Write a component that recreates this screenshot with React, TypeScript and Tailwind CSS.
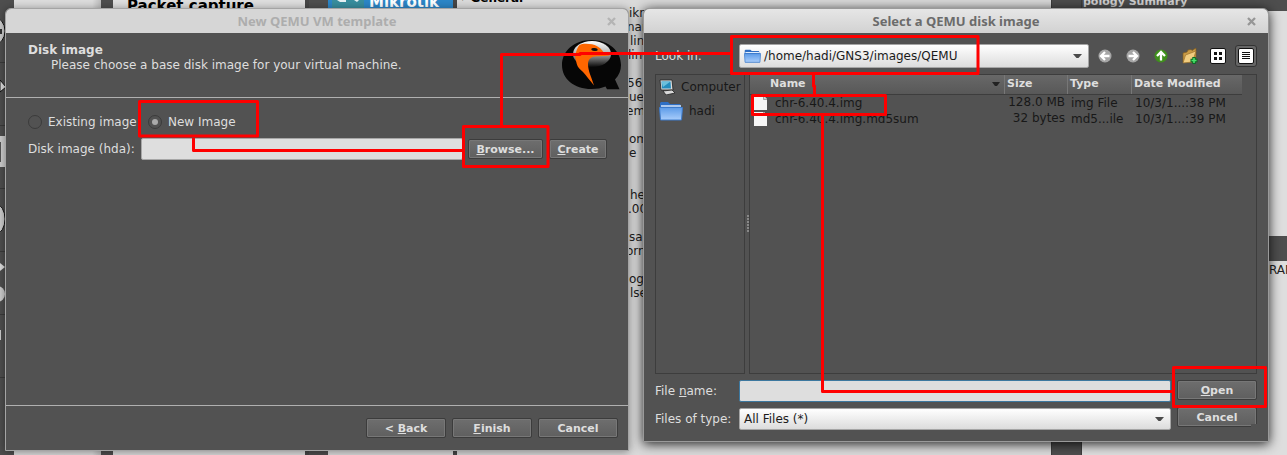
import React from "react";

const snippets: { y: number; dx: number; t: string }[] = [
  { y: 6, dx: 0, t: "ikro" },
  { y: 20, dx: -2, t: "nan" },
  { y: 34, dx: 1, t: "line" },
  { y: 48, dx: -1, t: "line" },
  { y: 76, dx: -2, t: "56" },
  { y: 90, dx: 0, t: "ue" },
  { y: 104, dx: -3, t: "em" },
  { y: 132, dx: 0, t: "om" },
  { y: 146, dx: 0, t: "e" },
  { y: 188, dx: 1, t: "he" },
  { y: 202, dx: -1, t: ".00" },
  { y: 230, dx: 0, t: "sal" },
  { y: 244, dx: -3, t: "orn" },
  { y: 272, dx: 0, t: "og" },
  { y: 286, dx: 1, t: "lse" },
];

function Btn({ children, className = "" }: { children: React.ReactNode; className?: string }) {
  return (
    <button
      className={`flex h-[20px] shrink-0 items-center justify-center rounded-[2px] border border-[#3c3c3c] bg-linear-to-b from-[#6e6e6e] to-[#5f5f5f] font-bold text-[11px] leading-none text-[#dedede] shadow-[inset_0_0_0_1px_#777] ${className}`}
    >
      <span>{children}</span>
    </button>
  );
}

function TitleBar({ title, active = false }: { title: string; active?: boolean }) {
  return (
    <div
      className={`relative flex h-[24px] shrink-0 items-center justify-center rounded-t-[5px] font-['Noto_Sans'] text-[13px] font-bold ${
        active ? "bg-linear-to-b from-[#e6e6e6] to-[#d2d2d2] text-[#6b6b6b]" : "bg-[#d6d6d6] text-[#adadad]"
      }`}
    >
      <span className="relative top-px">{title}</span>
      <svg className={`absolute right-[12px] top-[8px] ${active ? "text-[#969696]" : "text-[#b4b4b4]"}`} width="9" height="9" viewBox="0 0 9 9">
        <path d="M1 1l7 7M8 1l-7 7" stroke="currentColor" strokeWidth="2.3" />
      </svg>
    </div>
  );
}

function Folder({ w, h }: { w: number; h: number }) {
  return (
    <svg width={w} height={h} viewBox="0 0 24 20" preserveAspectRatio="none" className="shrink-0">
      <path d="M1 5V2l1-1h7l2 2h10l1 2v14H2z" fill="#2f6fc4" />
      <path d="M2 5h20" stroke="#e3efff" strokeWidth="1.4" />
      <path d="M.5 6.500h23L22.500 19h-21z" fill="url(#folderBlue)" stroke="#3c7acb" />
    </svg>
  );
}

function FileIcon() {
  return (
    <svg width="13" height="14" viewBox="0 0 13 14" className="shrink-0">
      <path d="M0 0h10l3 3V14H0z" fill="#f6f6f6" />
      <path d="M9.500 0v3.500H13" fill="#ccc" stroke="#777" strokeWidth=".6" />
    </svg>
  );
}

function QemuLogo() {
  return (
    <svg width="60" height="51" viewBox="0 0 60 51" className="shrink-0">
      <defs>
        <linearGradient id="gloss" x1="0" y1="0" x2="0" y2="1">
          <stop offset="0" stopColor="#fff" />
          <stop offset=".45" stopColor="#b5b5b5" />
          <stop offset="1" stopColor="#0a0a0a" />
        </linearGradient>
      </defs>
      <path d="M29.500 0C12 0 0 11 0 25s12 24 29.500 24c5.500 0 10-.8 14-2.500l1.500 2.700h12.500L53 39.500c4-4 6-9 6-14.500C59 11 47 0 29.500 0z" fill="#060606" />
      <ellipse cx="30" cy="14" rx="19" ry="13" fill="url(#gloss)" />
      <path d="M17 5.500C21 3 26 4 30 4.200c4 .8 6 2.500 8.500 4.300 1.500 1.500 2.500 3 3.500 4.500l6 2.500c-4 .5-7 .5-10 .8-4 .2-6 0-8.500 1.200-2.500 1.500-3.500 3.500-3.500 6.500 0 7 3.500 13 6 21.500-4-5-7.500-9.500-11-13.500-3-3-5.500-4.500-6.200-8C14 20 13 18.500 13 15.500c1-3.500 2-7 4-10z" fill="#ff6600" />
      <ellipse cx="32.500" cy="9.500" rx="3.200" ry="1.500" fill="#111" transform="rotate(8 32.500 9.500)" />
    </svg>
  );
}

function Backdrop() {
  return (
    <div className="absolute inset-0 flex overflow-hidden bg-[#4e4e4e] text-[12px]">
      <svg width="14" height="455" className="shrink-0">
        <g stroke="#3a3a3a">
          <path d="M0 62.500h14M0 125.500h14M0 188.500h14M0 251.500h14M0 314.500h14M0 377.500h14" />
        </g>
        <rect y="136" width="6" height="31" fill="#cfcfcf" />
        <rect y="142" width="1" height="20" fill="#555" />
        <ellipse cx="-6" cy="31" rx="11" ry="14" fill="#ccc" stroke="#111" />
        <rect y="29" width="2" height="5" fill="#333" />
        <path d="M0 80l6 7-6 5z" fill="#ddd" stroke="#111" />
        <ellipse cx="-4" cy="219" rx="9" ry="15" fill="#ccc" stroke="#111" />
        <path d="M0 263l5 4-5 4z" fill="#ddd" />
        <circle cx="-3" cy="294" r="8" fill="#ccc" />
        <rect y="330" width="1" height="10" fill="#ccc" />
      </svg>
      <div className="w-[87px] shrink-0 bg-linear-to-r from-[#dcdcdc] from-90% to-[#bcbcbc]" />
      <div className="w-[12px] shrink-0" />
      <div className="w-[192px] shrink-0 bg-[#dedede] pl-[14px] text-[15px] font-bold leading-[18px] text-black">
        <div className="-mt-[3px] whitespace-nowrap">Packet capture</div>
      </div>
      <div className="w-[23px] shrink-0 border-l-4 border-[#464646]" />
      <div className="w-[125px] shrink-0 bg-[#dedede]">
        <div className="flex h-[8px] bg-[#2c86c7] pl-[4px]">
          <div className="mr-[5px] h-[8px] w-[32px] shrink-0 bg-[#388e9e]">
            <svg width="32" height="8">
              <path d="M5 0h9v2H8zM22 0h5l-2 2z" fill="#e6f2f4" />
            </svg>
          </div>
          <span className="-mt-[6px] text-[15px] font-bold leading-[16px] text-white">Mikrotik</span>
        </div>
      </div>
      <div className="w-[4px] shrink-0 bg-[#464646]" />
      <div className="relative w-[594px] shrink-0 bg-[#dadada] text-[#202020]">
        <div className="-mt-[9px] flex items-center gap-[5px] pl-[3px] text-[12px] font-bold leading-[14px] text-black">
          <span className="text-[7px]">▼</span>General
        </div>
        {snippets.map(({ y, dx, t }) => (
          <div key={y} className="absolute left-[172px] whitespace-nowrap leading-[14px]" style={{ top: y, marginLeft: dx }}>
            {t}
          </div>
        ))}
      </div>
      <div className="w-[31px] shrink-0 border-x border-[#3d3d3d]" />
      <div className="flex flex-1 flex-col">
        <div className="h-[11px] shrink-0 text-[11px] font-bold leading-[12px] text-[#d5d5d5]">
          <div className="-mt-[4px] pl-px">pology Summary</div>
        </div>
        <div className="h-[225px] shrink-0 bg-[#dedede]" />
        <div className="h-[25px] shrink-0" />
        <div className="flex-1 bg-[#dedede] pl-[187px] pt-[2px] text-[12px] leading-[14px] text-[#222]">RAM</div>
      </div>
    </div>
  );
}

function WizardWindow() {
  return (
    <div className="absolute left-[5px] top-[8px] flex h-[443px] w-[624px] flex-col rounded-t-[6px] border border-[#a4a4a4] bg-[#525252] text-[12px] text-[#dedede] shadow-[0_1px_8px_rgba(0,0,0,0.4)]">
      <TitleBar title="New QEMU VM template" />
      <div className="flex h-[65px] shrink-0 justify-between border-b border-[#b0b0b0] pl-[22px] pr-[6px]">
        <div className="pt-[10px] leading-[15px]">
          <div className="font-bold">Disk image</div>
          <div className="pl-[23px]">Please choose a base disk image for your virtual machine.</div>
        </div>
        <div className="pt-[7px]"><QemuLogo /></div>
      </div>
      <div className="flex flex-1 flex-col pl-[22px] pt-[16px]">
        <div className="flex h-[16px] items-center">
          <span className="size-[14px] rounded-full border border-[#3b3b3b]" />
          <span className="ml-[6px] w-[100px]">Existing image</span>
          <span className="flex size-[14px] items-center justify-center rounded-full border border-[#3b3b3b]">
            <span className="size-[6px] rounded-full bg-[#aaa]" />
          </span>
          <span className="ml-[6px]">New Image</span>
        </div>
        <div className="mt-[8px] flex h-[22px] items-center">
          <span className="w-[113px]">Disk image (hda):</span>
          <span className="h-[22px] w-[322px] rounded-[2px] border border-[#a7a7a7] bg-[#dedede]" />
          <Btn className="ml-[5px] w-[75px]"><u>B</u>rowse...</Btn>
          <Btn className="ml-[6px] w-[58px]"><u>C</u>reate</Btn>
        </div>
      </div>
      <div className="flex h-[45px] shrink-0 justify-end gap-[6px] border-t border-[#b0b0b0] pr-[10px] pt-[12px]">
        <Btn className="w-[80px]">&lt; <u>B</u>ack</Btn>
        <Btn className="w-[80px]"><u>F</u>inish</Btn>
        <Btn className="w-[80px]">Cancel</Btn>
      </div>
    </div>
  );
}

function NavArrow({ turn, green = false }: { turn: number; green?: boolean }) {
  return (
    <svg width="14" height="14" viewBox="0 0 14 14" className="shrink-0">
      <circle cx="7" cy="7" r="6.500" fill={green ? "#3f8f1c" : "#a6a6a6"} />
      <g transform={`rotate(${turn} 7 7)`}>
        <path d="M11.500 7H4M7 3L3 7l4 4" fill="none" stroke="#fff" strokeWidth="2.300" />
      </g>
    </svg>
  );
}

function Caret() {
  return (
    <svg width="9" height="5" viewBox="0 0 9 5" className="shrink-0">
      <path d="M0 0h9L5.500 4h-2z" fill="#4a4a4a" />
    </svg>
  );
}

function FileDialog() {
  return (
    <div className="absolute left-[643px] top-[8px] flex h-[434px] w-[626px] flex-col rounded-t-[6px] border border-[#9a9a9a] bg-[#525252] text-[12px] text-[#dedede] shadow-[0_2px_12px_rgba(0,0,0,0.85)]">
      <TitleBar title="Select a QEMU disk image" active />
      <div className="flex h-[41px] shrink-0 items-center pl-[11px] pt-[5px]">
        <span className="w-[84px]">Look in:</span>
        <div className="flex h-[24px] w-[350px] items-center rounded-[2px] border border-[#a5a5a5] bg-linear-to-b from-white to-[#dcdcdc] pl-[4px] pr-[6px] text-[#1b1b1b]">
          <Folder w={17} h={14} />
          <span className="ml-[3px] flex-1">/home/hadi/GNS3/images/QEMU</span>
          <Caret />
        </div>
        <div className="ml-[9px] flex items-center gap-[14px]">
          <NavArrow turn={0} />
          <NavArrow turn={180} />
          <NavArrow turn={90} green />
        </div>
        <svg width="16" height="16" viewBox="0 0 16 16" className="ml-[14px] shrink-0">
          <path d="M1 14V5l4-1 1-2 3-.500 1 1L14 0v9l-3 5z" fill="#c99a45" stroke="#805b20" strokeWidth=".7" />
          <path d="M1 15L3.500 7 14 3l-3.500 11z" fill="#f1cd80" stroke="#9b712b" strokeWidth=".7" />
          <path d="M12 9v7M8.500 12.500h7" stroke="#0a6b23" strokeWidth="3.400" />
          <path d="M12 10v5M9.500 12.500h5" stroke="#4be36c" strokeWidth="1.600" />
        </svg>
        <svg width="16" height="16" viewBox="0 0 16 16" className="ml-[12px] shrink-0">
          <rect x=".5" y=".5" width="15" height="15" rx="1.500" fill="#fff" stroke="#111" />
          <path d="M4 4h3v3H4zM9 4h3v3H9zM4 9h3v3H4zM9 9h3v3H9z" fill="#111" />
        </svg>
        <div className="ml-[9px] flex size-[22px] items-center justify-center rounded-[3px] border border-[#333] bg-[#666]">
          <svg width="16" height="16" viewBox="0 0 16 16">
            <rect x=".5" y=".5" width="15" height="15" rx="1.500" fill="#fff" stroke="#111" />
            <path d="M4 4.500h8M4 6.500h8M4 8.500h8M4 10.500h8" stroke="#111" />
          </svg>
        </div>
      </div>
      <div className="flex h-[300px] shrink-0 pl-[11px] text-[#181818]">
        <div className="w-[90px] border border-[#3d3d3d]">
          <div className="flex h-[24px] items-center pl-[3px]">
            <svg width="16" height="16" viewBox="0 0 16 16" className="shrink-0">
              <path d="M1 1h12l1 10H2z" fill="#ddd" stroke="#222" strokeWidth=".8" />
              <path d="M2.500 2.500h9l.5 7h-9z" fill="#258dbe" />
              <path d="M2.500 2.500h9L4 8z" fill="#6bc0dd" />
              <path d="M4 12l9-1 3 3-9 2z" fill="#d8d8d8" stroke="#222" strokeWidth=".8" />
            </svg>
            <span className="ml-[6px]">Computer</span>
          </div>
          <div className="flex h-[24px] items-center pl-[3px]">
            <Folder w={24} h={20} />
            <span className="ml-[6px]">hadi</span>
          </div>
        </div>
        <div className="flex w-[4px] items-center justify-end">
          <svg width="2" height="20"><path d="M1 1v18" stroke="#888" strokeWidth="2" strokeDasharray="2 1" /></svg>
        </div>
        <div className="w-[508px] border border-[#3d3d3d]">
          <div className="flex h-[20px] w-[492px] border-b border-[#3d3d3d] bg-linear-to-b from-[#686868] to-[#585858] text-[11px] font-bold leading-[17px] text-[#dedede]">
            <div className="flex w-[255px] items-center justify-between border-r border-[#777] pl-[20px] pr-[4px]">
              <span className="-mt-[2px]">Name</span>
              <svg width="8" height="5"><path d="M0 0h8L5 4H3z" fill="#222" /></svg>
            </div>
            <div className="w-[63px] border-r border-[#777] pl-[2px]">Size</div>
            <div className="w-[64px] border-r border-[#777] pl-[2px]">Type</div>
            <div className="flex-1 pl-[2px]">Date Modified</div>
          </div>
          {[
            ["chr-6.40.4.img", "128.0 MB", "img File", "10/3/1...:38 PM"],
            ["chr-6.40.4.img.md5sum", "32 bytes", "md5...ile", "10/3/1...:39 PM"],
          ].map((r) => (
            <div key={r[0]} className="flex h-[16px] items-center leading-[16px]">
              <div className="flex w-[250px] items-center gap-[8px] pl-[4px]"><FileIcon />{r[0]}</div>
              <div className="w-[65px] -translate-y-px text-right">{r[1]}</div>
              <div className="w-[64px] pl-[6px]">{r[2]}</div>
              <div className="pl-[6px]">{r[3]}</div>
            </div>
          ))}
        </div>
      </div>
      <div className="flex pl-[11px] pt-[6px]">
        <div className="flex flex-col gap-[6px]">
          <div className="flex h-[22px] items-center">
            <span className="w-[84px]">File <u>n</u>ame:</span>
            <span className="h-[22px] w-[432px] rounded-[2px] border border-[#3d789f] bg-[#dedede]" />
          </div>
          <div className="flex h-[22px] items-center">
            <span className="w-[84px] whitespace-nowrap">Files of type:</span>
            <div className="flex h-[22px] w-[432px] items-center justify-between rounded-[2px] border border-[#a5a5a5] bg-linear-to-b from-white to-[#dcdcdc] pl-[4px] pr-[6px] text-[#1b1b1b]">
              All Files (*)<Caret />
            </div>
          </div>
        </div>
        <div className="ml-[6px] flex flex-col gap-[7px]">
          <Btn className="w-[80px]"><u>O</u>pen</Btn>
          <Btn className="w-[80px]">Cancel</Btn>
        </div>
      </div>
    </div>
  );
}

function Annotations() {
  return (
    <svg className="pointer-events-none absolute inset-0" width="1287" height="455" fill="none" stroke="#ff0000" strokeWidth="3" strokeLinejoin="round">
      <rect x="1251" y="424" width="6" height="4" fill="#525252" stroke="none" />
      <rect x="139.500" y="101.500" width="118" height="34.500" />
      <path d="M193.500 138v12.500H463" />
      <rect x="463.500" y="126.500" width="84.500" height="40" />
      <path d="M501.500 126V54.500H580V53.500H731" />
      <rect x="731.500" y="36.500" width="246.500" height="37" />
      <path d="M813.500 74v12l1 0v9" />
      <rect x="752.500" y="95.500" width="133" height="19" />
      <path d="M822.500 115v276.500h350" />
      <rect x="1173.500" y="367.500" width="92" height="39" />
    </svg>
  );
}

export default function App() {
  return (
    <main className="relative h-[455px] w-[1287px] overflow-hidden font-['DejaVu_Sans',sans-serif]">
      <svg width="0" height="0" className="absolute">
        <defs>
          <linearGradient id="folderBlue" x1="0" y1="0" x2="0" y2="1">
            <stop offset="0" stopColor="#5c9be8" />
            <stop offset="1" stopColor="#a9cdfb" />
          </linearGradient>
        </defs>
      </svg>
      <Backdrop />
      <WizardWindow />
      <FileDialog />
      <Annotations />
    </main>
  );
}
